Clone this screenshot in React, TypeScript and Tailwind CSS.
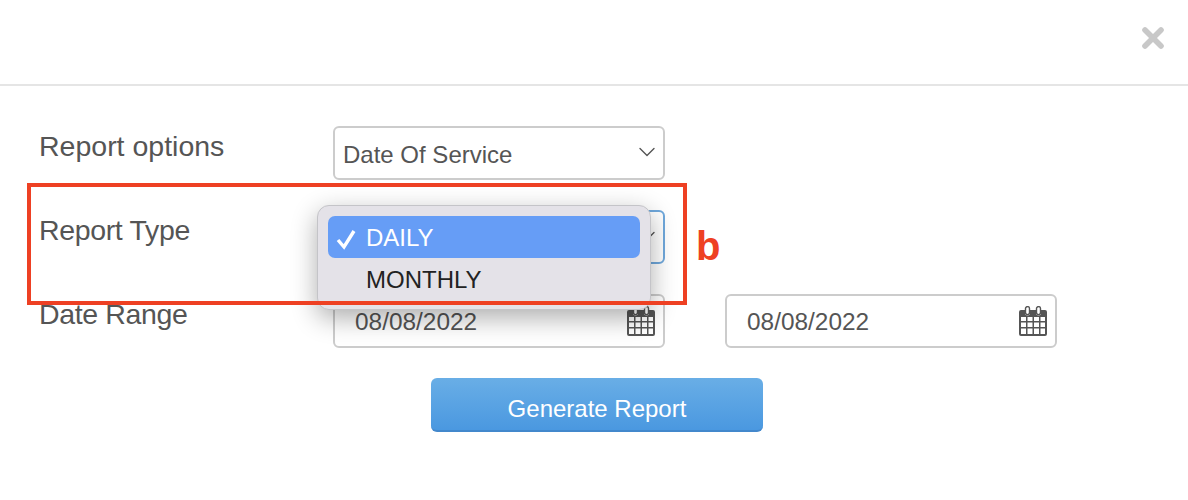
import React from 'react';
import { ChevronDown, X } from 'lucide-react';

const CalendarIcon = () => (
  <svg width="28" height="30" viewBox="0 0 28 30" className="shrink-0">
    <path fill="#555" fillRule="evenodd" d="M2 4h4v3a2.500 2.500 0 0 0 5 0V4h6v3a2.500 2.500 0 0 0 5 0V4h4a2 2 0 0 1 2 2v22a2 2 0 0 1-2 2H2a2 2 0 0 1-2-2V6a2 2 0 0 1 2-2ZM2 11v4h5v-4H2Zm6.500 0v4h5v-4h-5Zm6.500 0v4h5v-4h-5Zm6.500 0v4H26v-4h-4.500ZM2 16.500v4.500h5v-4.500H2Zm6.500 0v4.500h5v-4.500h-5Zm6.500 0v4.500h5v-4.500h-5Zm6.500 0v4.500H26v-4.500h-4.500ZM2 22.500V28h5v-5.500H2Zm6.500 0V28h5v-5.500h-5Zm6.500 0V28h5v-5.500h-5Zm6.500 0V28H26v-5.500h-4.500Z" />
    <rect x="6.500" y="0.600" width="4" height="8" rx="2" fill="#fff" stroke="#555" strokeWidth="1.400" />
    <rect x="17.500" y="0.600" width="4" height="8" rx="2" fill="#fff" stroke="#555" strokeWidth="1.400" />
  </svg>
);

const SelectBox = ({ value, focused }: { value?: string; focused?: boolean }) => (
  <div className={`w-[332px] h-[54px] bg-white rounded-[6px] border-2 flex items-center justify-between pl-[8px] pr-[2px] ${focused ? 'border-[#6fa8dc]' : 'border-[#ccc]'}`}>
    <span className="text-[24px] text-[#555] mt-[3px]">{value}</span>
    <ChevronDown className="w-[28px] h-[28px] text-[#555] -mt-[2px]" strokeWidth={1.2} />
  </div>
);

const DateBox = ({ value }: { value: string }) => (
  <div className="w-[332px] h-[54px] bg-white rounded-[6px] border-2 border-[#ccc] flex items-center justify-between pl-[20px] pr-[8px]">
    <span className="text-[24.4px] text-[#555] mt-[2px]">{value}</span>
    <CalendarIcon />
  </div>
);

const Row = ({ label, tight, children }: { label: string; tight?: boolean; children: React.ReactNode }) => (
  <div className="flex items-start">
    <label className={`w-[294px] text-[28.5px] leading-[40px] text-[#555] ${tight ? 'tracking-[-0.35px]' : ''}`}>{label}</label>
    {children}
  </div>
);

export default function App() {
  return (
    <div className="relative w-[1188px] h-[500px] bg-white overflow-hidden" style={{ fontFamily: '"Liberation Sans", Arial, sans-serif' }}>
      <div className="h-[86px] border-b-2 border-[#e5e5e5] flex justify-end items-start pt-[22px] pr-[19px]">
        <X className="w-[32px] h-[32px] text-[#c8c8c8]" strokeWidth={4.2} />
      </div>

      <div className="pl-[39px] pt-[40px] flex flex-col gap-[30px]">
        <Row label="Report options">
          <SelectBox value="Date Of Service" />
        </Row>
        <Row label="Report Type" tight>
          <SelectBox focused />
        </Row>
        <Row label="Date Range" tight>
          <div className="flex gap-[60px]">
            <DateBox value="08/08/2022" />
            <DateBox value="08/08/2022" />
          </div>
        </Row>
        <div className="pl-[392px]">
          <button className="w-[332px] h-[54px] rounded-[6px] bg-gradient-to-b from-[#69aee6] to-[#4a98e0] border-b-2 border-[#4388cc] text-white text-[24px] pt-[9px]">
            Generate Report
          </button>
        </div>
      </div>

      {/* native select popup sitting over the form */}
      <div className="absolute left-[317px] top-[205px] w-[334px] h-[105px] bg-[#e4e2e8] rounded-[12px] border border-[#c4c4c8] shadow-[0_8px_26px_rgba(0,0,0,0.32)] px-[10px] pt-[10px]">
        <div className="h-[42px] rounded-[7px] bg-[#669df6] flex items-center text-white text-[24px]">
          <svg width="22" height="24" viewBox="0 0 22 24" className="ml-[8px] mr-[8px] mt-[4px]">
            <path d="M2 13l6 7L18 4" fill="none" stroke="#fff" strokeWidth="3.400" />
          </svg>
          <span className="mt-[2px]">DAILY</span>
        </div>
        <div className="h-[42px] flex items-center text-[#222] text-[24px] pl-[38px] pt-[2px]">MONTHLY</div>
      </div>

      {/* annotation */}
      <div className="absolute left-[27px] top-[183px] w-[660px] h-[122px] border-[4px] border-[#ee4023]" />
      <div className="absolute left-[696px] top-[222px] text-[40px] leading-[48px] font-bold text-[#ee4023]">b</div>
    </div>
  );
}
